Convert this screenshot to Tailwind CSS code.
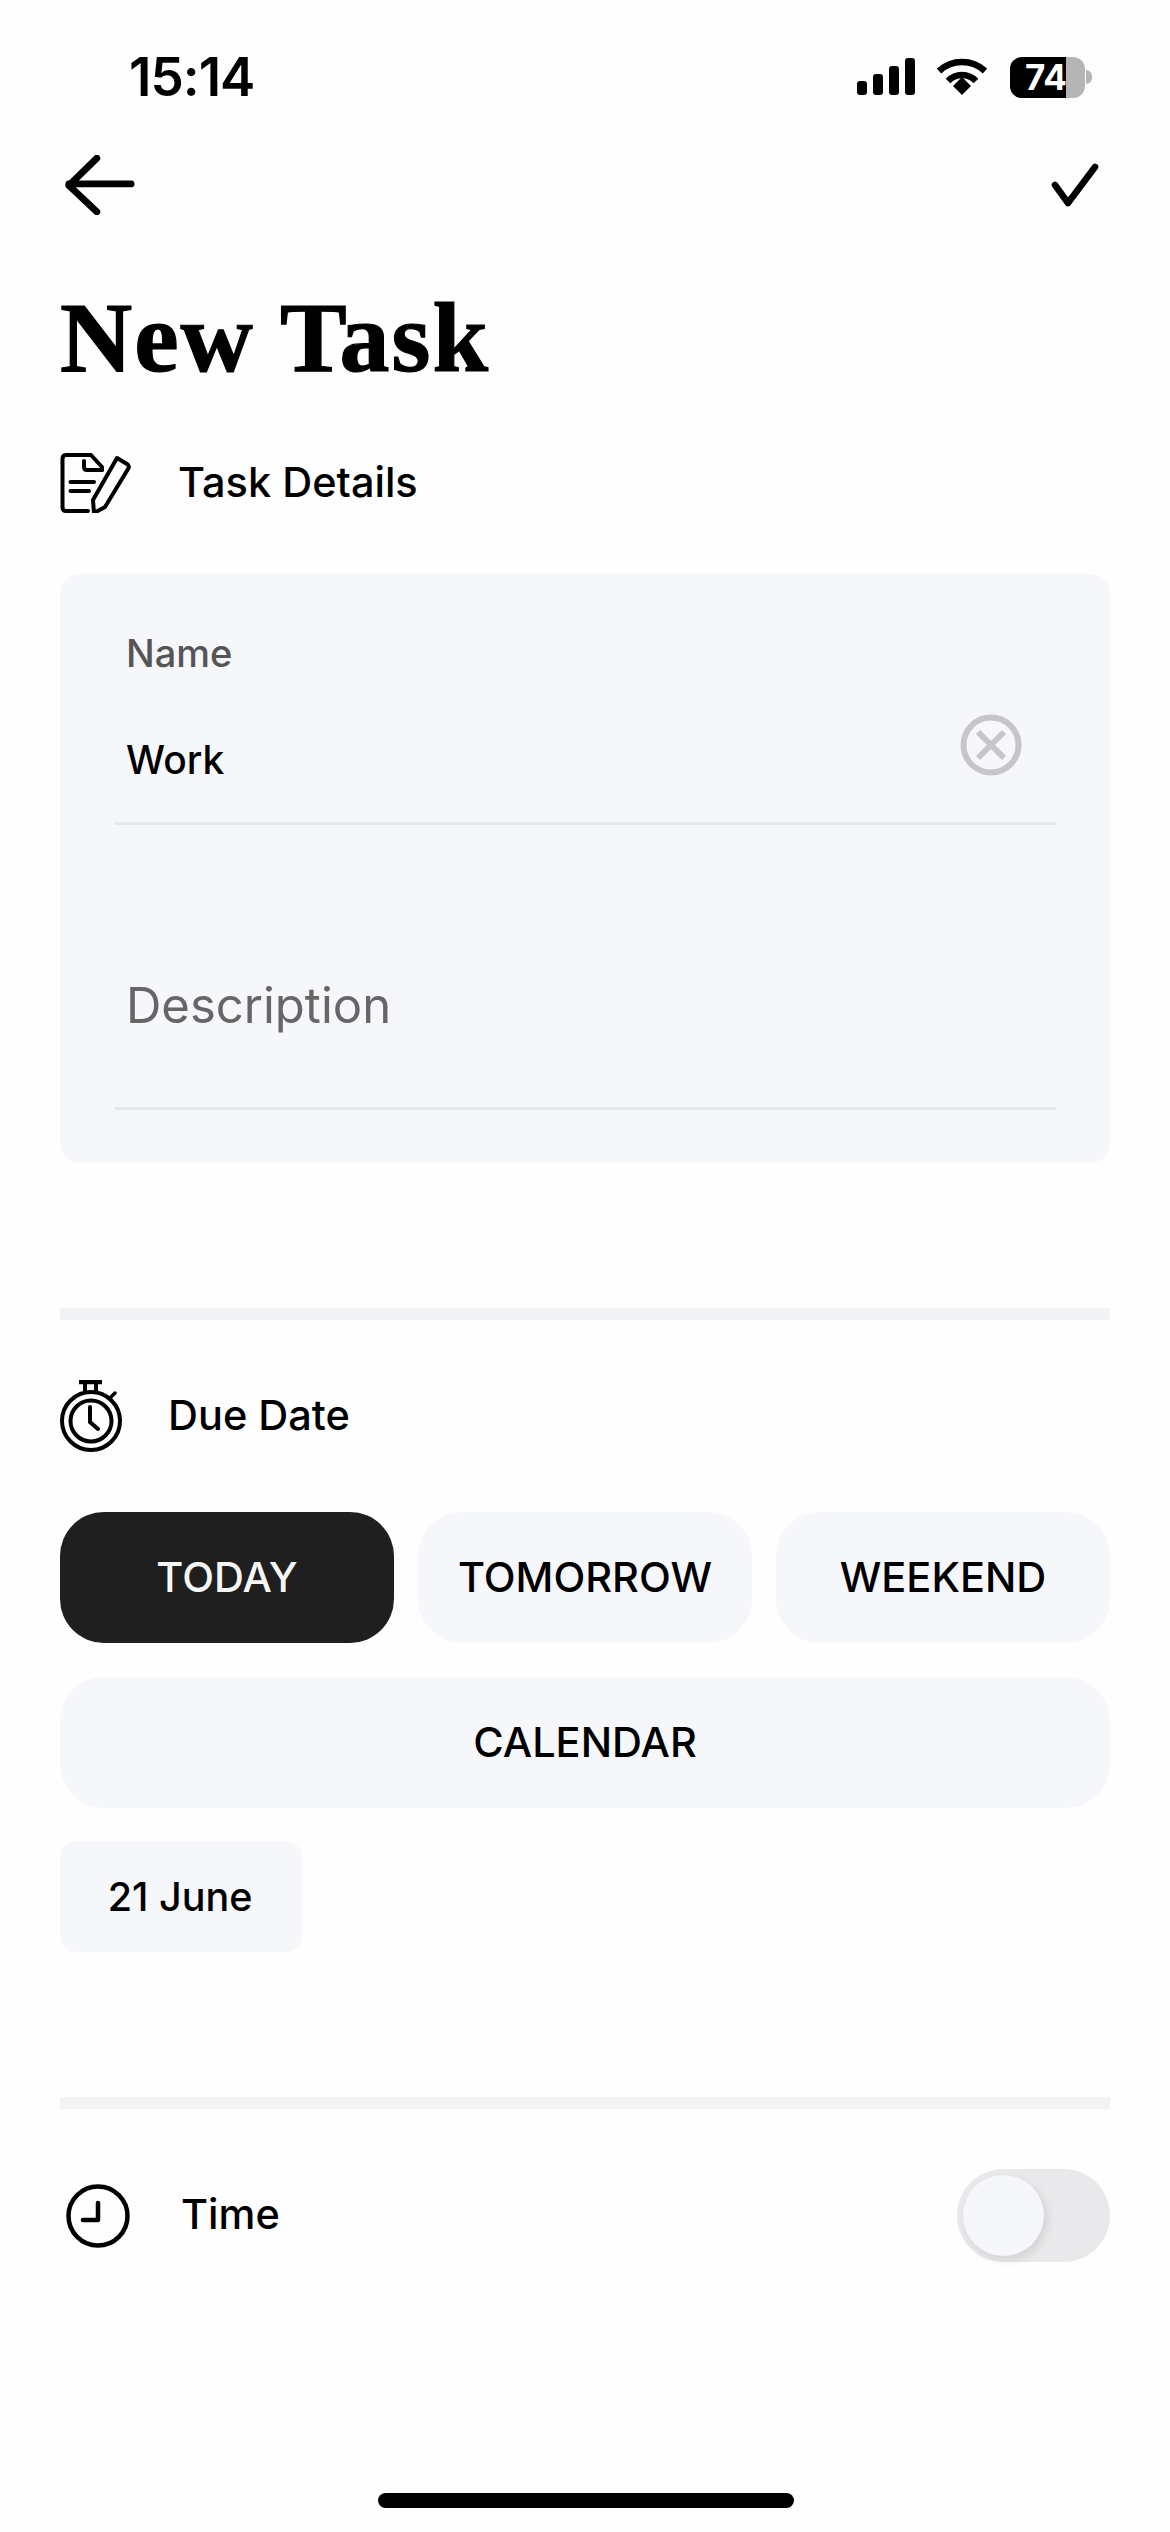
<!DOCTYPE html>
<html lang="en">
<head>
  <meta charset="UTF-8">
  <title>New Task</title>
  <script src="https://cdn.jsdelivr.net/npm/@tailwindcss/browser@4"></script>
</head>
<body class="bg-[#fefefe]">
<div class="relative w-[1170px] h-[2532px] overflow-hidden font-['Inter',sans-serif] text-black">

  <!-- status bar -->
  <div class="h-[154px] flex items-center pl-[129px] pr-[85px] justify-between">
    <span class="text-[53px] font-semibold tracking-[-1px] leading-none">15:14</span>
    <div class="flex items-center gap-[20px]">
      <svg width="60" height="38" viewBox="0 0 60 38" fill="#000">
        <rect x="1" y="23" width="10" height="14" rx="3"/><rect x="17" y="16" width="10" height="21" rx="3"/><rect x="33" y="8" width="10" height="29" rx="3"/><rect x="49" y="0" width="10" height="37" rx="3"/>
      </svg>
      <svg width="52" height="38" viewBox="0 0 52 38" fill="none" stroke="#000" stroke-width="6.5">
        <path d="M3 13 C16 1 36 1 49 13"/>
        <path d="M12 23 C20 15 32 15 40 23"/>
        <path d="M17 28 L26 19 L35 28 L26 37 Z" fill="#000" stroke="none"/>
      </svg>
      <div class="relative w-[75px] h-[41px] rounded-[12px] overflow-hidden bg-[#b5b5b5] ml-[2px]">
        <div class="absolute inset-y-0 left-0 w-[56px] bg-black"></div>
        <span class="absolute inset-0 flex items-center justify-center pr-[3px] text-white text-[35px] font-bold leading-none">74</span>
      </div>
    </div>
    <div class="absolute left-[1086px] top-[70px] w-[6px] h-[14px] rounded-r-full bg-[#b5b5b5]"></div>
  </div>

  <!-- nav -->
  <div class="flex items-center justify-between h-[62px] pl-[65px] pr-[70px]">
    <svg width="70" height="60" viewBox="0 0 64 56" fill="none" stroke="#000" stroke-width="6.4" stroke-linecap="round" stroke-linejoin="round">
      <path d="M29 3 L3 28.5 L29 53"/><path d="M3 27 H61"/>
    </svg>
    <svg width="50" height="46" viewBox="0 0 50 46" fill="none" stroke="#000" stroke-width="6.6" stroke-linecap="round" stroke-linejoin="round">
      <path d="M5 23 L18 41 L45 5"/>
    </svg>
  </div>

  <!-- title -->
  <h1 class="mt-[72px] ml-[60px] font-['Liberation_Serif',serif] font-bold text-[100px] leading-[100px] tracking-[2px] [-webkit-text-stroke:1.2px_black]">New Task</h1>

  <!-- task details -->
  <div class="mt-[65px] ml-[60px] flex items-center h-[60px]">
    <svg width="74" height="60" viewBox="0 0 72 60" fill="none" stroke="#000" stroke-width="4" stroke-linecap="round" stroke-linejoin="round">
      <path d="M27 58 H5 Q1.5 58 1.5 54 V6 Q1.5 2 5 2 H30 L41 14 V17"/>
      <path d="M23 8 V14 Q23 17 26 17 H41"/>
      <path d="M9.5 29 H33"/><path d="M9.5 38 H28"/>
      <path d="M56 5 L66 11 Q69 13 67 16 L44 54 L33 60 L32 47 Z"/>
    </svg>
    <span class="ml-[44px] text-[41.5px] font-[450] leading-none">Task Details</span>
  </div>

  <!-- card -->
  <div class="relative mt-[61px] mx-[60px] h-[589px] rounded-[20px] bg-[#f6f7fb] pl-[55px] pr-[54px]">
    <div class="pl-[11px] pt-[59px] text-[38px] leading-[40px] font-medium text-[#555]">Name</div>
    <div class="mt-[67px] pl-[11px] h-[85px] border-b-[3px] border-[#e6e7eb] text-[39px] leading-[40px] font-medium">Work</div>
    <svg class="absolute left-[900px] top-[140px]" width="62" height="62" viewBox="0 0 62 62" fill="none" stroke="#c6c6ca" stroke-width="6">
      <circle cx="31" cy="31" r="27.5"/><path d="M18 18 L44 44 M44 18 L18 44"/>
    </svg>
    <div class="mt-[153px] pl-[11px] h-[132px] border-b-[3px] border-[#e6e7eb] text-[49px] leading-[56px] text-[#666]">Description</div>
  </div>

  <div class="mt-[145px] mx-[60px] h-[12px] bg-[#f2f3f5]"></div>

  <!-- due date -->
  <div class="mt-[60px] ml-[60px] flex items-center h-[72px]">
    <svg width="62" height="72" viewBox="0 0 62 72" fill="none" stroke="#000" stroke-width="4" stroke-linecap="round">
      <path d="M19 2 H42" stroke-width="4.5" stroke-linecap="butt"/>
      <path d="M25 3 V13 M36 3 V13" stroke-linecap="butt"/>
      <path d="M50 18 L55 13" stroke-width="3.5"/>
      <circle cx="31" cy="41" r="29"/>
      <circle cx="31" cy="41" r="20.5"/>
      <path d="M30 27 V42 L38 49"/>
    </svg>
    <span class="ml-[46px] text-[41.5px] font-[450] leading-none">Due Date</span>
  </div>

  <!-- date options -->
  <div class="mt-[60px] mx-[60px] grid grid-cols-3 gap-x-[24px] gap-y-[34px] text-[41.5px] font-[450] leading-none">
    <button class="h-[131px] rounded-[44px] bg-[#1f1f1f] text-[#f5f5f5]">TODAY</button>
    <button class="h-[131px] rounded-[44px] bg-[#f6f7fb]">TOMORROW</button>
    <button class="h-[131px] rounded-[44px] bg-[#f6f7fb]">WEEKEND</button>
    <button class="col-span-3 h-[131px] rounded-[44px] bg-[#f6f7fb]">CALENDAR</button>
  </div>

  <div class="mt-[33px] ml-[60px] w-[242px] h-[111px] rounded-[16px] bg-[#f6f7fb] flex items-center justify-center pt-[2px] pr-[2px] text-[39.5px] font-medium leading-none">21 June</div>

  <div class="mt-[145px] mx-[60px] h-[12px] bg-[#f2f3f5]"></div>

  <!-- time -->
  <div class="mt-[60px] mx-[60px] flex items-center justify-between h-[93px]">
    <div class="flex items-center pl-[6px]">
      <svg width="64" height="64" viewBox="0 0 64 64" fill="none" stroke="#000" stroke-width="4.5">
        <circle cx="32" cy="32" r="29.5"/>
        <path d="M32 19 V36 H17" stroke-width="4.5" stroke-linecap="round" stroke-linejoin="round"/>
      </svg>
      <span class="ml-[51px] -mt-[2px] text-[41.5px] font-[450] leading-none">Time</span>
    </div>
    <div class="relative w-[153px] h-[93px] rounded-full bg-[#e9e9eb]">
      <div class="absolute left-[6px] top-[6px] w-[81px] h-[81px] rounded-full bg-[#f6f7fb] shadow-[3px_4px_10px_rgba(0,0,0,0.1)]"></div>
    </div>
  </div>

  <!-- home indicator -->
  <div class="absolute left-[378px] bottom-[24px] w-[416px] h-[15px] rounded-full bg-black"></div>
</div>
</body>
</html>
